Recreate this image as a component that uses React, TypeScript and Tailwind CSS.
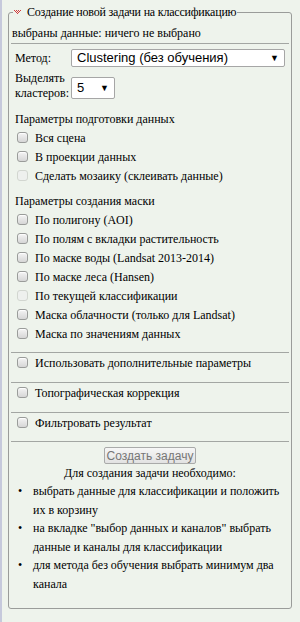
import React from "react";

function Box({ disabled }: { disabled?: boolean }) {
  return (
    <span
      className={
        "inline-block w-[11px] h-[11px] rounded-[3px] border shrink-0 " +
        (disabled
          ? "border-[#d2d6d0] bg-[#eef0ee]"
          : "border-[#9a9c9a] bg-gradient-to-b from-[#f4f4f4] to-[#d6d6d6] shadow-[inset_0_1px_1px_rgba(255,255,255,0.9)]")
      }
    />
  );
}

function Check({ label, disabled }: { label: string; disabled?: boolean }) {
  return (
    <div className="flex items-center h-[19px] pl-[7px]">
      <Box disabled={disabled} />
      <span className="ml-[7px]">{label}</span>
    </div>
  );
}

function Hr() {
  return <div className="h-px bg-[#a3a6a3] mx-[1px]" />;
}

function Tri() {
  const dots: [number, number][] = [
    [0, 0], [2, 0], [4, 0], [6, 0],
    [1, 1], [3, 1], [5, 1],
    [2, 2], [4, 2],
    [3, 3],
  ];
  return (
    <svg width="8" height="5" viewBox="0 0 8 5" className="mr-[5px]">
      {dots.map(([x, y], i) => (
        <rect key={i} x={x} y={y} width="1" height="1" fill="#d23c3c" />
      ))}
    </svg>
  );
}

function Select({ text, w }: { text: string; w: string }) {
  return (
    <div
      className={
        "flex items-center justify-between bg-white border border-[#a6a6a6] rounded-[2px] text-[13px] text-black pl-[5px] pr-[5px] font-['Liberation_Sans',Arial,sans-serif] " +
        w
      }
    >
      <span>{text}</span>
      <span className="text-[9px]">▼</span>
    </div>
  );
}

export default function App() {
  return (
    <div className="min-h-[622px] w-[300px] bg-[#eef3ec] border-l-2 border-[#c6c9dc] pl-[6px] pr-[8px] pt-[4px] text-[12px] text-black leading-[16px] font-['Liberation_Serif','Times_New_Roman',serif]">
      <fieldset className="border border-[#9a9c9a] rounded-[3px] px-[1px] min-h-[605px]">
        <legend className="ml-[3px] px-[1px] flex items-center leading-[16px] text-[12px] font-['Liberation_Serif','Times_New_Roman',serif]">
          <Tri />
          <span className="text-[12px] tracking-[-0.2px]">Создание новой задачи на классификацию</span>
        </legend>
        <div className="pt-[5px] pl-[2px] h-[23px]">выбраны данные: ничего не выбрано</div>
        <Hr />
        <div className="flex items-center mt-[5px] pl-[5px] h-[18px]">
          <span className="w-[56px]">Метод:</span>
          <Select text="Clustering (без обучения)" w="w-[214px] h-[18px]" />
        </div>
        <div className="flex items-start mt-[4px] pl-[5px]">
          <span className="w-[56px] leading-[15px]">
            Выделять
            <br />
            кластеров:
          </span>
          <Select text="5" w="w-[44px] h-[22px] mt-[6px]" />
        </div>
        <div className="mt-[8px] pl-[5px] h-[19px] flex items-center">Параметры подготовки данных</div>
        <Check label="Вся сцена" />
        <Check label="В проекции данных" />
        <Check label="Сделать мозаику (склеивать данные)" disabled />
        <div className="mt-[6px] pl-[5px] h-[19px] flex items-center">Параметры создания маски</div>
        <Check label="По полигону (AOI)" />
        <Check label="По полям с вкладки растительность" />
        <Check label="По маске воды (Landsat 2013-2014)" />
        <Check label="По маске леса (Hansen)" />
        <Check label="По текущей классификации" disabled />
        <Check label="Маска облачности (только для Landsat)" />
        <Check label="Маска по значениям данных" />
        <div className="h-[9px]" />
        <Hr />
        <Check label="Использовать дополнительные параметры" />
        <div className="h-[10px]" />
        <Hr />
        <Check label="Топографическая коррекция" />
        <div className="h-[10px]" />
        <Hr />
        <Check label="Фильтровать результат" />
        <div className="h-[9px]" />
        <Hr />
        <div className="flex justify-center mt-[5px]">
          <button className="h-[17px] px-[2px] border border-[#a9aaa9] rounded-[2px] bg-gradient-to-b from-[#f6f6f6] to-[#e2e2e2] text-[12px] leading-[14px] text-[#767676] font-['Liberation_Sans',Arial,sans-serif]">
            Создать задачу
          </button>
        </div>
        <div className="text-center h-[18px] flex items-center justify-center">
          Для создания задачи необходимо:
        </div>
        <ul className="leading-[18.5px] pr-[4px]">
          <li className="flex">
            <span className="w-[23px] pl-[8px] shrink-0">•</span>
            <span>выбрать данные для классификации и положить их в корзину</span>
          </li>
          <li className="flex">
            <span className="w-[23px] pl-[8px] shrink-0">•</span>
            <span>на вкладке "выбор данных и каналов" выбрать данные и каналы для классификации</span>
          </li>
          <li className="flex">
            <span className="w-[23px] pl-[8px] shrink-0">•</span>
            <span>для метода без обучения выбрать минимум два канала</span>
          </li>
        </ul>
      </fieldset>
    </div>
  );
}
